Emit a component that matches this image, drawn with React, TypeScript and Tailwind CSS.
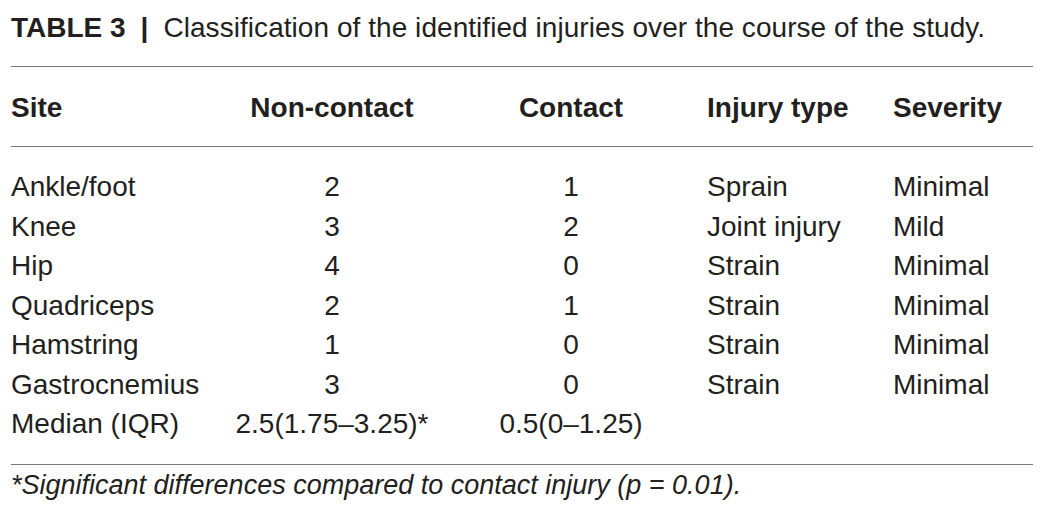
import React from 'react';

const rows = [
  { site: 'Ankle/foot', non: '2', contact: '1', type: 'Sprain', severity: 'Minimal' },
  { site: 'Knee', non: '3', contact: '2', type: 'Joint injury', severity: 'Mild' },
  { site: 'Hip', non: '4', contact: '0', type: 'Strain', severity: 'Minimal' },
  { site: 'Quadriceps', non: '2', contact: '1', type: 'Strain', severity: 'Minimal' },
  { site: 'Hamstring', non: '1', contact: '0', type: 'Strain', severity: 'Minimal' },
  { site: 'Gastrocnemius', non: '3', contact: '0', type: 'Strain', severity: 'Minimal' },
  { site: 'Median (IQR)', non: '2.5(1.75–3.25)*', contact: '0.5(0–1.25)', type: '', severity: '' },
];

const cols = 'grid grid-cols-[218px_206px_272px_186px_140px]';

const App = () => {
  return (
    <div className="w-[1052px] h-[523px] bg-white text-[#231f20] font-['Liberation_Sans',Arial,sans-serif]">
      <div className="w-[1022px] ml-[11px]">
        {/* Caption */}
        <div className="pt-[8px] h-[48px] text-[28px] leading-[40px] whitespace-nowrap">
          <span className="font-bold">TABLE 3</span>
          <span className="font-bold mx-[15px]">|</span>
          <span className="tracking-[0.05px]">Classification of the identified injuries over the course of the study.</span>
        </div>

        <div className="mt-[18px] h-px bg-[#7a7a7a]" />

        {/* Header */}
        <div className={`${cols} mt-[21px] text-[28px] leading-[40px] font-bold`}>
          <div>Site</div>
          <div className="text-center">Non-contact</div>
          <div className="text-center">Contact</div>
          <div>Injury type</div>
          <div>Severity</div>
        </div>

        <div className="mt-[18px] h-px bg-[#7a7a7a]" />

        {/* Body */}
        <div className="pt-[20px]">
          {rows.map((r) => (
            <div key={r.site} className={`${cols} h-[39.5px] text-[28px] leading-[39.5px] whitespace-nowrap`}>
              <div>{r.site}</div>
              <div className="text-center">{r.non}</div>
              <div className="text-center">{r.contact}</div>
              <div>{r.type}</div>
              <div>{r.severity}</div>
            </div>
          ))}
        </div>

        <div className="mt-[20px] h-px bg-[#7a7a7a]" />

        {/* Footnote */}
        <div className="mt-[2px] text-[27px] leading-[36px] italic whitespace-nowrap">
          *Significant differences compared to contact injury (p = 0.01).
        </div>
      </div>
    </div>
  );
};

export default App;
